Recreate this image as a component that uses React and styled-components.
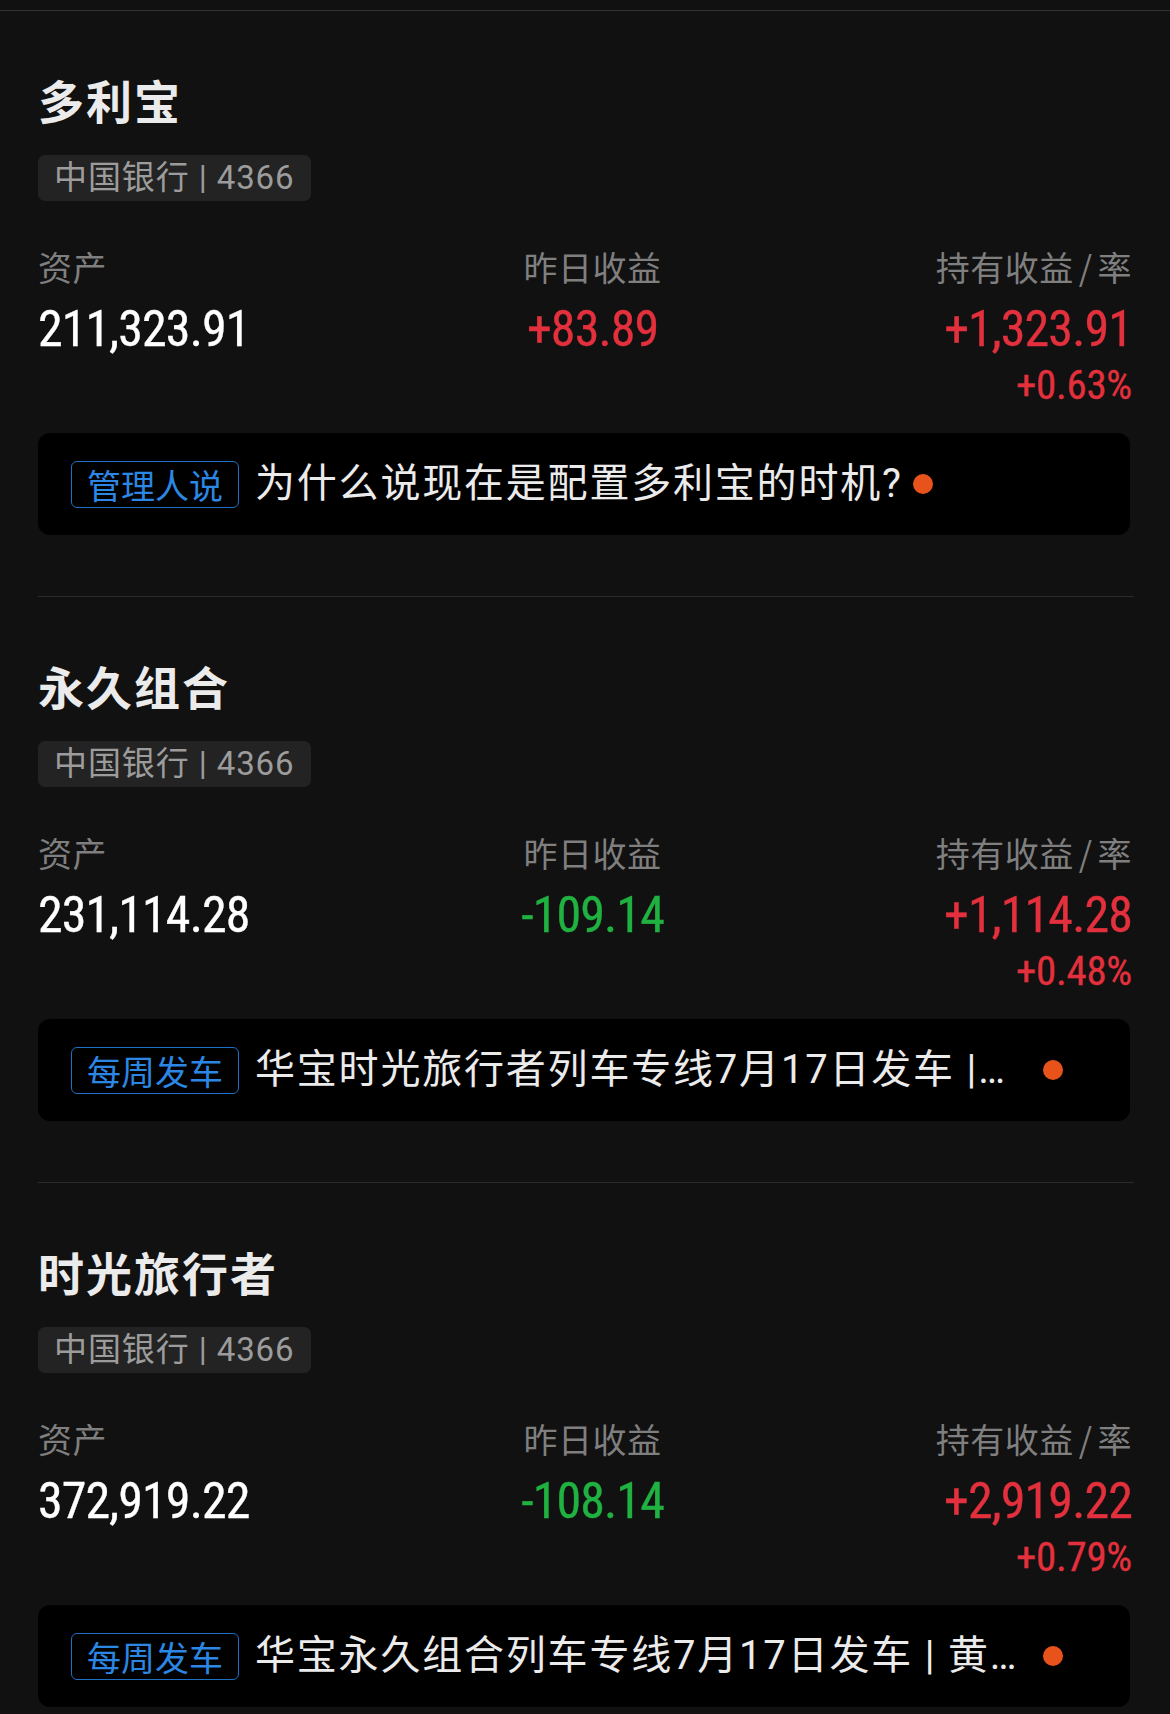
import React from "react";
import styled, { createGlobalStyle } from "styled-components";

const GlobalStyle = createGlobalStyle`
  html, body {
    margin: 0;
    padding: 0;
    background: #111111;
    overflow: hidden;
  }
  * { box-sizing: border-box; }
`;

const CJK = `"Noto Sans CJK SC", "Noto Sans", sans-serif`;
const NUM = `"Liberation Sans Narrow", "Arial Narrow", "Roboto Condensed", Roboto, sans-serif`;

const Page = styled.div`
  width: 1170px;
  background: #111111;
  font-family: ${CJK};
`;

const TopEdge = styled.div`
  height: 11px;
  border-bottom: 1px solid #333333;
`;

const Section = styled.section`
  margin: 0 36px 0 38px;
  padding: 61px 0 61px;
  border-bottom: 1px solid #2b2b2b;
`;

const Title = styled.h2`
  margin: 0;
  font-family: ${CJK};
  font-weight: 700;
  font-size: 46px;
  line-height: 54px;
  letter-spacing: 2px;
  color: #ebebeb;
`;

const AccountTag = styled.div`
  display: inline-block;
  margin-top: 29px;
  height: 46px;
  padding: 0 16px;
  border-radius: 7px;
  background: #232323;
  font-family: Roboto, ${CJK};
  font-size: 33px;
  line-height: 46px;
  letter-spacing: 0.9px;
  color: #9c9c9c;
`;

const StatsRow = styled.div`
  margin-top: 46px;
  padding-right: 2px;
  display: flex;
  justify-content: space-between;
  align-items: flex-start;
`;

const StatCol = styled.div`
  display: flex;
  flex-direction: column;
  align-items: ${(p) =>
    p.$align === "center" ? "center" : p.$align === "right" ? "flex-end" : "flex-start"};
  text-align: ${(p) => p.$align};
`;

const Label = styled.div`
  font-family: ${CJK};
  font-size: 34px;
  line-height: 40px;
  letter-spacing: 0.5px;
  color: #7f7f7f;
  white-space: nowrap;
`;

const Slash = styled.span`
  margin: 0 5px;
`;

const toneColor = (tone) =>
  tone === "up" ? "#e3303d" : tone === "down" ? "#20b241" : "#ffffff";

const Value = styled.div`
  margin-top: 14px;
  font-family: ${NUM};
  font-size: 50px;
  line-height: 56px;
  letter-spacing: -0.9px;
  color: ${(p) => toneColor(p.$tone)};
  -webkit-text-stroke: 0.35px currentColor;
  white-space: nowrap;
`;

const Rate = styled.div`
  margin-top: 6px;
  font-family: ${NUM};
  font-size: 41px;
  line-height: 44px;
  letter-spacing: -0.3px;
  color: ${(p) => toneColor(p.$tone)};
  -webkit-text-stroke: 0.3px currentColor;
  white-space: nowrap;
`;

const NewsCard = styled.div`
  margin: 26px 4px 0 0;
  height: 102px;
  padding: 0 67px 0 33px;
  display: flex;
  align-items: center;
  border-radius: 12px;
  background: #000000;
`;

const NewsTag = styled.span`
  flex: 0 0 auto;
  height: 47px;
  padding: 0 15px;
  border: 1px solid #1e6fc5;
  border-radius: 6px;
  font-family: ${CJK};
  font-size: 34px;
  line-height: 45px;
  color: #2b87e3;
`;

const NewsText = styled.span`
  flex: 0 1 auto;
  min-width: 0;
  margin-left: 16px;
  overflow: hidden;
  white-space: nowrap;
  text-overflow: ellipsis;
  font-family: Roboto, ${CJK};
  font-size: 40px;
  line-height: 48px;
  letter-spacing: 1.8px;
  color: #ebebeb;
`;

const Dot = styled.span`
  flex: 0 0 auto;
  width: 20px;
  height: 20px;
  margin-left: 10px;
  border-radius: 50%;
  background: #e8531c;
`;

const products = [
  {
    name: "多利宝",
    bank: "中国银行 | 4366",
    asset: "211,323.91",
    yesterday: "+83.89",
    yTone: "up",
    hold: "+1,323.91",
    rate: "+0.63%",
    tag: "管理人说",
    news: "为什么说现在是配置多利宝的时机?",
  },
  {
    name: "永久组合",
    bank: "中国银行 | 4366",
    asset: "231,114.28",
    yesterday: "-109.14",
    yTone: "down",
    hold: "+1,114.28",
    rate: "+0.48%",
    tag: "每周发车",
    news: "华宝时光旅行者列车专线7月17日发车 |黄金配置正当时",
  },
  {
    name: "时光旅行者",
    bank: "中国银行 | 4366",
    asset: "372,919.22",
    yesterday: "-108.14",
    yTone: "down",
    hold: "+2,919.22",
    rate: "+0.79%",
    tag: "每周发车",
    news: "华宝永久组合列车专线7月17日发车 | 黄金配置正当时",
  },
];

function ProductSection({ p }) {
  return (
    <Section>
      <Title>{p.name}</Title>
      <AccountTag>{p.bank}</AccountTag>
      <StatsRow>
        <StatCol $align="left">
          <Label>资产</Label>
          <Value>{p.asset}</Value>
        </StatCol>
        <StatCol $align="center">
          <Label>昨日收益</Label>
          <Value $tone={p.yTone}>{p.yesterday}</Value>
        </StatCol>
        <StatCol $align="right">
          <Label>
            持有收益<Slash>/</Slash>率
          </Label>
          <Value $tone="up">{p.hold}</Value>
          <Rate $tone="up">{p.rate}</Rate>
        </StatCol>
      </StatsRow>
      <NewsCard>
        <NewsTag>{p.tag}</NewsTag>
        <NewsText>{p.news}</NewsText>
        <Dot />
      </NewsCard>
    </Section>
  );
}

export default function App() {
  return (
    <>
      <GlobalStyle />
      <Page>
        <TopEdge />
        {products.map((p) => (
          <ProductSection key={p.name} p={p} />
        ))}
      </Page>
    </>
  );
}
